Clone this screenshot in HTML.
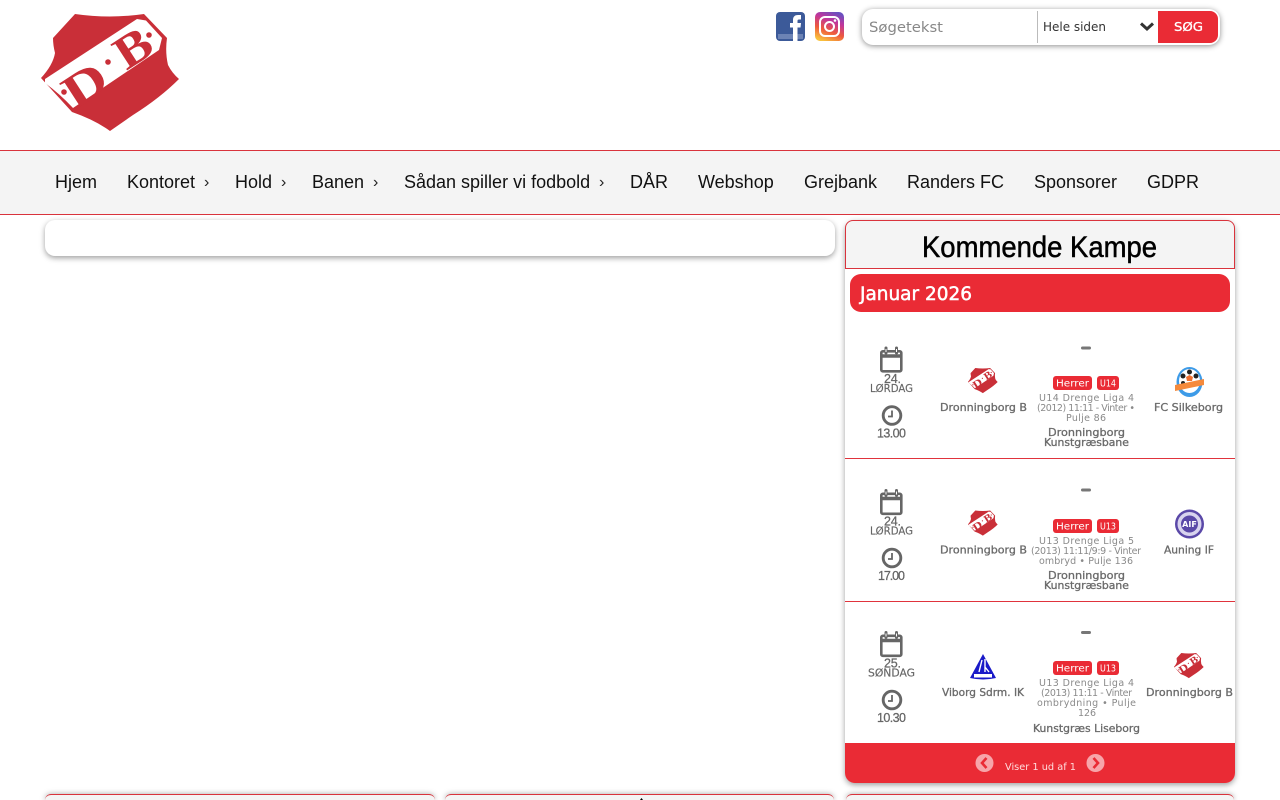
<!DOCTYPE html>
<html lang="da">
<head>
<meta charset="utf-8">
<title>Dronningborg Boldklub</title>
<style>
html,body{margin:0;padding:0;width:1280px;height:800px;overflow:hidden;background:#fff;font-family:"Liberation Sans",sans-serif}
#w{position:absolute;left:0;top:0;width:1280px;height:800px;overflow:hidden}
.a{position:absolute}
.nav{left:0;top:150px;width:1280px;height:63px;background:#f4f4f4;border-top:1px solid #d9333c;border-bottom:1px solid #d9333c}
.n{position:absolute;top:171px;font-size:18px;line-height:22px;color:#111;white-space:nowrap}
.arr{position:absolute;top:173px;font-size:16px;line-height:20px;color:#222}
.card{background:#fff;border-radius:10px;box-shadow:0 2px 6px rgba(0,0,0,.38)}
.bot{top:794px;width:390px;height:6px;background:#f4f4f4;border-top:1.500px solid #d9333c;border-radius:6px 6px 0 0;box-sizing:border-box;box-shadow:0 0 6px rgba(0,0,0,.35)}
svg{position:absolute;left:0;top:0}
text{font-family:"DejaVu Sans",sans-serif}
.g{fill:#666;stroke:#666;stroke-width:.15}
.t{font-family:"Liberation Sans",sans-serif;font-size:12.500px;fill:#666;stroke:#666;stroke-width:.25}
.d{fill:#8a8a8a;font-size:9.500px}
.b{fill:#6a6a6a;font-size:10.500px;stroke:#6a6a6a;stroke-width:.3}
.w{fill:#fff;font-size:10px}
.s{font-family:"Liberation Serif",serif;font-weight:bold}
</style>
</head>
<body>
<div id="w">
<div class="a nav"></div>
<div class="n" style="left:55px">Hjem</div>
<div class="n" style="left:127px">Kontoret</div><div class="arr" style="left:204px">›</div>
<div class="n" style="left:235px">Hold</div><div class="arr" style="left:281px">›</div>
<div class="n" style="left:312px">Banen</div><div class="arr" style="left:373px">›</div>
<div class="n" style="left:404px">Sådan spiller vi fodbold</div><div class="arr" style="left:599px">›</div>
<div class="n" style="left:630px">DÅR</div>
<div class="n" style="left:698px">Webshop</div>
<div class="n" style="left:804px">Grejbank</div>
<div class="n" style="left:907px">Randers FC</div>
<div class="n" style="left:1034px">Sponsorer</div>
<div class="n" style="left:1147px">GDPR</div>

<div class="a card" style="left:45px;top:220px;width:790px;height:36px"></div>
<div class="a card" style="left:845px;top:220px;width:390px;height:563px"></div>
<div class="a" style="left:845px;top:220px;width:390px;height:49px;box-sizing:border-box;background:#f4f4f4;border:1px solid #d9333c;border-radius:8px 8px 0 0"></div>
<div class="a" style="left:850px;top:274px;width:380px;height:38px;background:#ea2b35;border-radius:11px"></div>
<div class="a" style="left:845px;top:458px;width:390px;height:1px;background:#e0333c"></div>
<div class="a" style="left:845px;top:601px;width:390px;height:1px;background:#e0333c"></div>
<div class="a" style="left:845px;top:743px;width:390px;height:40px;background:#ea2b35;border-radius:0 0 10px 10px"></div>
<div class="a bot" style="left:45px"></div>
<div class="a bot" style="left:445px;width:389px"></div>
<div class="a bot" style="left:846px;width:388px"></div>

<div class="a" style="left:862px;top:9px;width:358px;height:36px;background:#fff;border-radius:11px;box-shadow:0 1px 6px rgba(0,0,0,.45)"></div>
<div class="a" style="left:1037px;top:11px;width:1px;height:32px;background:#bbb"></div>
<div class="a" style="left:1158px;top:11px;width:60px;height:32px;background:#ea2b35;border-radius:0 8px 8px 0"></div>

<svg width="1280" height="800" viewBox="0 0 1280 800">
<defs>
<linearGradient id="ig" x1=".3" y1="1" x2=".7" y2="0">
<stop offset="0" stop-color="#f9c13c"/><stop offset=".35" stop-color="#ee5a3c"/><stop offset=".7" stop-color="#c0359c"/><stop offset="1" stop-color="#6a50c0"/>
</linearGradient>
<g id="shield">
<path d="M75 14Q110 19 144 14L167 38Q165 52 168 65Q172 73 179 79Q160 98 133 115L110 131Q95 120 72 112L41 78Q53 65 55 53Q53 45 53 38Z" fill="#c92f38"/>
<path d="M45 79L137 19L146 20.500L162 38L159 50L73 108Q60 94 45 83Z" fill="#fff"/>
<circle cx="64" cy="92" r="2.800" fill="#c92f38"/><circle cx="108" cy="62" r="2.800" fill="#c92f38"/><circle cx="149" cy="35" r="2.800" fill="#c92f38"/>
<text class="s" x="0" y="0" font-size="47" fill="#c92f38" text-anchor="middle" transform="translate(85 85) rotate(-33) scale(1.3 1) translate(0 15.500)">D</text>
<text class="s" x="0" y="0" font-size="47" fill="#c92f38" text-anchor="middle" transform="translate(133 48) rotate(-33) scale(1.15 1) translate(0 15.500)">B</text>
</g>
<g id="cal" fill="none" stroke="#666" stroke-width="2.600">
<rect x="881.300" y="351.300" width="20" height="20" rx="1.500"/>
<path d="M881 356H902" stroke-width="3.500"/>
<path d="M886 348V353M896.500 348V353" stroke-width="3" stroke-linecap="round"/>
<path d="M886 349V352M896.500 349V352" stroke="#fff" stroke-width="1"/>
</g>
<g id="clk" fill="none" stroke="#666">
<circle cx="892" cy="415.500" r="8.800" stroke-width="2.900"/>
<path d="M892 410.500V416.500H888" stroke-width="1.800"/>
</g>
</defs>

<!-- main logo -->
<use href="#shield"/>

<!-- social -->
<rect x="776" y="12" width="29" height="29" rx="4" fill="#3c5a99"/>
<rect x="778" y="34" width="25" height="5" fill="#6c83b5"/>
<path d="M793 41V27.500H790V23H793V20C793 16.500 795 15 798 15H801V19.500H799C797.800 19.500 797.500 20 797.500 21V23H801L800.500 27.500H797.500V41Z" fill="#fff"/>
<rect x="815" y="12" width="29" height="29" rx="5" fill="url(#ig)"/>
<rect x="820" y="17" width="19" height="19" rx="5" fill="none" stroke="#fff" stroke-width="2"/>
<circle cx="829.500" cy="26.500" r="4.500" fill="none" stroke="#fff" stroke-width="2"/>
<circle cx="835" cy="20.500" r="1.300" fill="#fff"/>

<!-- search -->
<text x="869" y="32" font-size="14.500" fill="#888" textLength="74" lengthAdjust="spacingAndGlyphs">Søgetekst</text>
<text x="1043" y="31" font-size="12.500" fill="#333" textLength="63" lengthAdjust="spacingAndGlyphs">Hele siden</text>
<path d="M1141 23.500L1147 29L1153 23.500" fill="none" stroke="#333" stroke-width="3"/>
<text x="1174" y="31" font-size="12" fill="#fff" stroke="#fff" stroke-width=".3" textLength="29" lengthAdjust="spacingAndGlyphs">SØG</text>

<!-- panel headings -->
<text x="922" y="257" font-size="30" fill="#000" stroke="#000" stroke-width=".5" style="font-family:'Liberation Sans',sans-serif" textLength="235" lengthAdjust="spacingAndGlyphs">Kommende Kampe</text>
<text x="860" y="300" font-size="19" fill="#fff" stroke="#fff" stroke-width=".5" textLength="112" lengthAdjust="spacingAndGlyphs">Januar 2026</text>

<!-- row 1 -->
<use href="#cal"/><use href="#clk"/>
<text class="t" x="884" y="383" textLength="17">24.</text>
<text class="g" x="870" y="392" font-size="10.500" textLength="43" lengthAdjust="spacingAndGlyphs">LØRDAG</text>
<text class="t" x="877" y="437.500" textLength="29">13.00</text>
<g transform="translate(968 368) scale(.215)"><use href="#shield" transform="translate(-41 -14)"/></g>
<text class="b" x="940" y="411" textLength="87" lengthAdjust="spacingAndGlyphs">Dronningborg B</text>
<rect x="1081" y="346.500" width="10" height="3" rx="1.500" fill="#777"/>
<rect x="1053" y="376" width="39" height="14" rx="3" fill="#ea2b35"/><rect x="1097" y="376" width="22" height="14" rx="3" fill="#ea2b35"/>
<text class="w" x="1056" y="386.500" textLength="33" lengthAdjust="spacingAndGlyphs">Herrer</text>
<text class="w" x="1100" y="386.500" textLength="16" lengthAdjust="spacingAndGlyphs">U14</text>
<text class="d" x="1039" y="401" textLength="95">U14 Drenge Liga 4</text>
<text class="d" x="1037" y="411" textLength="98">(2012) 11:11 - Vinter •</text>
<text class="d" x="1066" y="421" textLength="40">Pulje 86</text>
<text class="b" x="1048" y="436" textLength="77" lengthAdjust="spacingAndGlyphs">Dronningborg</text>
<text class="b" x="1044" y="446" textLength="85" lengthAdjust="spacingAndGlyphs">Kunstgræsbane</text>
<ellipse cx="1189.500" cy="382" rx="13" ry="15" fill="#3d9be8"/>
<ellipse cx="1189.500" cy="381" rx="10.500" ry="12" fill="#fff"/>
<circle cx="1183" cy="376" r="2.500" fill="#222"/><circle cx="1196" cy="376" r="2.500" fill="#222"/><circle cx="1189.500" cy="372" r="2.500" fill="#222"/><circle cx="1183" cy="383" r="2" fill="#222"/><circle cx="1196" cy="383" r="2" fill="#222"/>
<path d="M1186 377L1189.500 375L1193 377L1192 381H1187Z" fill="#f07030"/>
<path d="M1175 385L1204 379V385L1175 391Z" fill="#f58a3c"/>
<text class="b" x="1154" y="411" textLength="69" lengthAdjust="spacingAndGlyphs">FC Silkeborg</text>

<!-- row 2 -->
<g transform="translate(0 142.500)"><use href="#cal"/><use href="#clk"/></g>
<text class="t" x="884" y="525.500" textLength="17">24.</text>
<text class="g" x="870" y="534.500" font-size="10.500" textLength="43" lengthAdjust="spacingAndGlyphs">LØRDAG</text>
<text class="t" x="878" y="580" textLength="27">17.00</text>
<g transform="translate(968 510.500) scale(.215)"><use href="#shield" transform="translate(-41 -14)"/></g>
<text class="b" x="940" y="553.500" textLength="87" lengthAdjust="spacingAndGlyphs">Dronningborg B</text>
<rect x="1081" y="488.500" width="10" height="3" rx="1.500" fill="#777"/>
<rect x="1053" y="519" width="39" height="14" rx="3" fill="#ea2b35"/><rect x="1097" y="519" width="22" height="14" rx="3" fill="#ea2b35"/>
<text class="w" x="1056" y="529.500" textLength="33" lengthAdjust="spacingAndGlyphs">Herrer</text>
<text class="w" x="1100" y="529.500" textLength="16" lengthAdjust="spacingAndGlyphs">U13</text>
<text class="d" x="1039" y="544" textLength="95">U13 Drenge Liga 5</text>
<text class="d" x="1031" y="554" textLength="110">(2013) 11:11/9:9 - Vinter</text>
<text class="d" x="1039" y="564" textLength="94">ombryd • Pulje 136</text>
<text class="b" x="1048" y="579" textLength="77" lengthAdjust="spacingAndGlyphs">Dronningborg</text>
<text class="b" x="1044" y="589" textLength="85" lengthAdjust="spacingAndGlyphs">Kunstgræsbane</text>
<circle cx="1189.500" cy="524" r="14.500" fill="#5a48a8"/>
<circle cx="1189.500" cy="524" r="12" fill="#d8d3ee"/>
<circle cx="1189.500" cy="524" r="8.500" fill="#5a48a8"/>
<text x="1189.500" y="527" font-size="8" font-weight="bold" fill="#fff" text-anchor="middle">AIF</text>
<text class="b" x="1164" y="553.500" textLength="50" lengthAdjust="spacingAndGlyphs">Auning IF</text>

<!-- row 3 -->
<g transform="translate(0 284.500)"><use href="#cal"/><use href="#clk"/></g>
<text class="t" x="884" y="667.500" textLength="17">25.</text>
<text class="g" x="868" y="676.500" font-size="10.500" textLength="47" lengthAdjust="spacingAndGlyphs">SØNDAG</text>
<text class="t" x="877" y="722" textLength="29">10.30</text>
<path d="M983 654L996 678Q983 681 970 678Z" fill="#1a1ac8"/>
<path d="M979 672L982 660M985 659V672M985 667L989 672" stroke="#fff" stroke-width="1.400" fill="none"/>
<rect x="974" y="674" width="18" height="3.500" fill="#fff"/>
<text class="b" x="942" y="696" textLength="82" lengthAdjust="spacingAndGlyphs">Viborg Sdrm. IK</text>
<rect x="1081" y="631" width="10" height="3" rx="1.500" fill="#777"/>
<rect x="1053" y="661" width="39" height="14" rx="3" fill="#ea2b35"/><rect x="1097" y="661" width="22" height="14" rx="3" fill="#ea2b35"/>
<text class="w" x="1056" y="671.500" textLength="33" lengthAdjust="spacingAndGlyphs">Herrer</text>
<text class="w" x="1100" y="671.500" textLength="16" lengthAdjust="spacingAndGlyphs">U13</text>
<text class="d" x="1039" y="686" textLength="95">U13 Drenge Liga 4</text>
<text class="d" x="1041" y="696" textLength="91">(2013) 11:11 - Vinter</text>
<text class="d" x="1037" y="706" textLength="99">ombrydning • Pulje</text>
<text class="d" x="1078" y="716" textLength="18">126</text>
<text class="b" x="1033" y="732" textLength="107" lengthAdjust="spacingAndGlyphs">Kunstgræs Liseborg</text>
<g transform="translate(1174 653) scale(.215)"><use href="#shield" transform="translate(-41 -14)"/></g>
<text class="b" x="1146" y="696" textLength="87" lengthAdjust="spacingAndGlyphs">Dronningborg B</text>

<!-- footer -->
<circle cx="984.500" cy="763" r="9" fill="#f7a5aa"/>
<path d="M986.500 758L982 763L986.500 768" fill="none" stroke="#ea2b35" stroke-width="2.600"/>
<circle cx="1095.500" cy="763" r="9" fill="#f7a5aa"/>
<path d="M1093.500 758L1098 763L1093.500 768" fill="none" stroke="#ea2b35" stroke-width="2.600"/>
<text x="1005" y="770" font-size="10" fill="#fdd" textLength="71" lengthAdjust="spacingAndGlyphs">Viser 1 ud af 1</text>

<path d="M640 800L641.500 798L643 800Z" fill="#000"/>
</svg>
</div>
</body>
</html>
